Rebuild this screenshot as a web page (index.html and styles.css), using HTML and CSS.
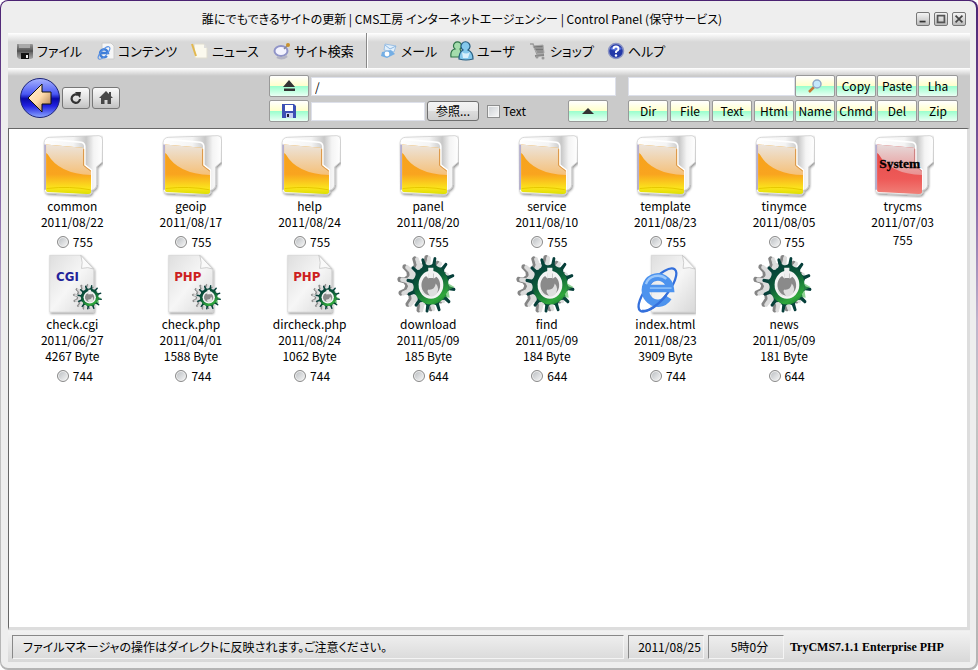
FILE: index.html
```html
<!DOCTYPE html>
<html lang="ja">
<head>
<meta charset="utf-8">
<title>Control Panel</title>
<link rel="stylesheet" href="styles.css">
</head>
<body>
<svg class="defs" aria-hidden="true">
  <defs>
    <linearGradient id="paper" x1="0" y1="0" x2="1" y2="1"><stop offset="0" stop-color="#dedede"/><stop offset=".5" stop-color="#f6f6f6"/><stop offset="1" stop-color="#d8d8d8"/></linearGradient>
    <linearGradient id="back" x1="0" y1="0" x2="1" y2="0"><stop offset="0" stop-color="#fff"/><stop offset=".5" stop-color="#f4f4f4"/><stop offset=".72" stop-color="#c8c8c8"/><stop offset=".85" stop-color="#f4f4f4"/><stop offset="1" stop-color="#fff"/></linearGradient>
    <linearGradient id="amber" x1="0" y1="0" x2="0" y2="1"><stop offset="0" stop-color="#f5a21c"/><stop offset=".6" stop-color="#f9a41f"/><stop offset=".88" stop-color="#fbe41c"/><stop offset="1" stop-color="#dce000"/></linearGradient>
    <linearGradient id="amberTop" x1="0" y1="0" x2="0" y2="1"><stop offset="0" stop-color="#ece4dc"/><stop offset="1" stop-color="#f5c078"/></linearGradient>
    <linearGradient id="red" x1="0" y1="0" x2="0" y2="1"><stop offset="0" stop-color="#e04848"/><stop offset=".7" stop-color="#ee5a58"/><stop offset="1" stop-color="#f08078"/></linearGradient>
    <linearGradient id="redTop" x1="0" y1="0" x2="0" y2="1"><stop offset="0" stop-color="#e6dada"/><stop offset="1" stop-color="#ea9090"/></linearGradient>
    <linearGradient id="green" gradientUnits="userSpaceOnUse" x1="-40" y1="-70" x2="30" y2="70"><stop offset="0" stop-color="#04383a"/><stop offset=".45" stop-color="#0c5c38"/><stop offset=".8" stop-color="#30a83c"/><stop offset="1" stop-color="#0f6a2c"/></linearGradient>
    <linearGradient id="blueBall" x1="0" y1="0" x2="0" y2="1"><stop offset="0" stop-color="#a8b4ff"/><stop offset=".4" stop-color="#4a58f4"/><stop offset=".52" stop-color="#0808a8"/><stop offset=".7" stop-color="#2020e0"/><stop offset="1" stop-color="#8ca8ff"/></linearGradient>
    <linearGradient id="sand" x1="0" y1="0" x2="1" y2="1"><stop offset="0" stop-color="#fff0d8"/><stop offset=".5" stop-color="#ffdcac"/><stop offset="1" stop-color="#a06c40"/></linearGradient>
    <linearGradient id="disk" x1="0" y1="0" x2="0" y2="1"><stop offset="0" stop-color="#999"/><stop offset=".45" stop-color="#555"/><stop offset="1" stop-color="#aaa"/></linearGradient>
    <filter id="soft" x="-20%" y="-20%" width="140%" height="140%"><feDropShadow dx="3" dy="4" stdDeviation="3" flood-opacity=".45"/></filter>

    <g id="tooth"><path d="M-15-52 L-6-62 L-5-80 Q0-85 4-80 L5-62 L15-52Z"/></g>
    <g id="cog">
      <use href="#tooth"/><use href="#tooth" transform="rotate(30)"/><use href="#tooth" transform="rotate(60)"/><use href="#tooth" transform="rotate(90)"/><use href="#tooth" transform="rotate(120)"/><use href="#tooth" transform="rotate(150)"/><use href="#tooth" transform="rotate(180)"/><use href="#tooth" transform="rotate(210)"/><use href="#tooth" transform="rotate(240)"/><use href="#tooth" transform="rotate(270)"/><use href="#tooth" transform="rotate(300)"/><use href="#tooth" transform="rotate(330)"/>
    </g>
    <g id="gear">
      <g transform="translate(-27 -3) rotate(10)" fill="#858585" stroke="#858585" stroke-width="6"><use href="#cog"/><circle r="54"/></g>
      <g transform="translate(-19 -2) rotate(10)" fill="#dcdcdc" stroke="#dcdcdc" stroke-width="3"><use href="#cog"/><circle r="56"/></g>
      <g transform="rotate(10)" fill="url(#green)"><use href="#cog"/></g>
      <circle r="58" fill="url(#green)"/>
      <path d="M30 50 A60 60 0 0 0 58-4 L78 6 L58 16 L62 38 L46 36Z" fill="#45b44c" opacity=".6"/>
      <circle r="41" fill="#f4f4f4"/>
      <path d="M-8-33 V-18 L-16-26 A31 31 0 1 0 18-24 L9-18 V-33Z" fill="#8a8a8a"/>
      <path d="M-34 4 Q-26 30 0 36 Q-18 18-8 14 Q12 16 16-4 Q30 10 18 28 Q-4 44-28 24Z" fill="#dedede"/>
      <rect x="-9" y="-50" width="17" height="30" fill="#f0f0f0"/>
    </g>
    <g id="sheet">
      <path d="M58 16 H153 L192 58 V189 H58Z" fill="url(#paper)" stroke="#d2d2d2" stroke-width="2" filter="url(#soft)"/>
      <path d="M153 16 Q160 40 155 56 Q175 50 192 58Z" fill="#fafafa" stroke="#bbb" stroke-width="2"/>
    </g>
    <g id="folderBack">
      <path d="M131 44 Q132 29 148 28 L298 23 Q309 24 309 36 L308 103 L291 118 V172 Q290 187 276 189 V197 Q272 205 262 204 L140 198 Q132 197 132 188Z" fill="url(#back)" stroke="#c8c8c8" stroke-width="2" filter="url(#soft)"/>
      <path d="M136 44 Q140 34 150 35 L244 43 Q255 45 255 56 V112 L275 128 V188" fill="none" stroke="#fff" stroke-width="5"/>
      <path d="M134 50 V188" stroke="#9c94c0" stroke-width="4"/>
    </g>
    <path id="frontPath" d="M137 50 L248 60 L253 64 V114 L274 130 V196 Q272 201 264 201 L142 195 Q137 194 137 190Z"/>
    <path id="frontTop" d="M137 50 L248 60 L253 64 V114 L274 130 V143 Q176 140 142 80 L137 76Z"/>
    <symbol id="folder" viewBox="123 21 186 192"><use href="#folderBack"/><use href="#frontPath" fill="url(#amber)"/><use href="#frontTop" fill="url(#amberTop)"/><path d="M251 64 V114 L273 131" fill="none" stroke="#dc9848" stroke-width="3"/><path d="M139 184 Q210 176 272 188" fill="none" stroke="#e6c800" stroke-width="3"/></symbol>
    <symbol id="folder-system" viewBox="123 21 186 192"><use href="#folderBack"/><use href="#frontPath" fill="url(#red)"/><use href="#frontTop" fill="url(#redTop)"/><path d="M251 64 V114 L273 131" fill="none" stroke="#cc8080" stroke-width="3"/><text x="206" y="122" text-anchor="middle" class="system">System</text></symbol>
    <symbol id="cgi" viewBox="33 9 186 192"><use href="#sheet"/><text x="112" y="95" text-anchor="middle" class="tag tag-cgi">CGI</text><use href="#gear" transform="translate(180 144) scale(.46)"/></symbol>
    <symbol id="php" viewBox="33 9 186 192"><use href="#sheet"/><text x="116" y="95" text-anchor="middle" class="tag tag-php">PHP</text><use href="#gear" transform="translate(180 144) scale(.46)"/></symbol>
    <symbol id="program" viewBox="53 9 186 192"><use href="#gear" transform="translate(155 106) scale(.92 1.040)"/></symbol>
    <symbol id="html" viewBox="7 9 186 192"><use href="#sheet"/><ellipse cx="77" cy="122" rx="82" ry="30" transform="rotate(-50 77 122)" fill="none" stroke="#3470dc" stroke-width="7"/><path d="M50 117 H116 A38 40 0 1 0 110 144" fill="none" stroke="#4d93ee" stroke-width="23"/><path d="M42 104 A38 36 0 0 1 104 88" fill="none" stroke="#9cc8fa" stroke-width="7"/><path d="M54 116 H120" stroke="#8cc0fa" stroke-width="5"/><path d="M30 184 A82 30 -50 0 0 104 138" fill="none" stroke="#3470dc" stroke-width="7"/></symbol>

    <symbol id="m-file" viewBox="0 0 18 18"><path d="M1 2 H16 Q17 2 17 3 V16 L15 17 H3 L1 15Z" fill="url(#disk)"/><path d="M3 2 H14 V6 H3Z" fill="#aaa"/><path d="M1 8 H17 V10 H1Z" fill="#555"/><path d="M5 11 H13 V17 H5Z" fill="#111"/><path d="M10 13 H12 V16 H10Z" fill="#eee"/></symbol>
    <symbol id="m-content" viewBox="0 0 18 18"><path d="M5 1 H14 L17 4 V17 H5Z" fill="#f6f6f6" stroke="#ccc"/><path d="M4 11 H11 A4 4 0 1 0 10 14" fill="none" stroke="#3f7ed8" stroke-width="2.4"/><ellipse cx="7" cy="11" rx="8" ry="3" transform="rotate(-48 7 11)" fill="none" stroke="#5c93e4"/></symbol>
    <symbol id="m-news" viewBox="0 0 18 18"><path d="M3 2 H13 L16 6 V16 H4Z" fill="#fbf9ee" stroke="#e0ddd0"/><path d="M13 2 V6 H16" fill="#ddd"/><path d="M1 2 L5 14" stroke="#e2b84e" stroke-width="2"/></symbol>
    <symbol id="m-search" viewBox="0 0 18 18"><ellipse cx="8" cy="9" rx="6.500" ry="5" fill="#f4f4ff" stroke="#9094c8" stroke-width="2"/><path d="M4 15 Q9 18 14 14" stroke="#b4b4c4" stroke-width="2.500" fill="none"/><path d="M11 7 L15 3" stroke="#889" stroke-width="1.5"/><circle cx="15" cy="3" r="2" fill="#c8902c"/></symbol>
    <symbol id="m-mail" viewBox="0 0 18 18"><path d="M5 2 L16 4 L14 10 L4 8Z" fill="#e2f0fc" stroke="#9cc0e4"/><path d="M2 10 L11 8 L15 12 L7 16 L1 14Z" fill="#74aee4"/><circle cx="7" cy="12" r="2.4" fill="#fff"/><path d="M5 3 L10 7 L16 4" stroke="#8cb6e0" fill="none"/></symbol>
    <symbol id="m-user" viewBox="0 0 24 20"><g stroke-width="1.2"><path d="M1 16 Q0 9 5 8 A4 4 0 1 1 10 8 L13 16Z" fill="#a4dcac" stroke="#2e7448"/><path d="M9 18 Q9 11 13 9 A4.500 4.500 0 1 1 18 9 Q23 11 23 18 Q16 20 9 18Z" fill="#84c8ec" stroke="#245c80"/><path d="M12 11 Q16 14 20 11 L18 17 H13Z" fill="#d8f0fc"/></g></symbol>
    <symbol id="m-shop" viewBox="0 0 18 18"><path d="M1 2 H4 L8 12 H15" fill="none" stroke="#999" stroke-width="1.5"/><path d="M4 4 L14 3 L15 11 H8Z" fill="#777" stroke="#aaa"/><path d="M6 6 H14 M7 9 H14" stroke="#bbb" stroke-width=".8"/><path d="M6 14 L15 13" stroke="#888" stroke-width="2"/><circle cx="8" cy="15" r="1.500" fill="#999"/><circle cx="14" cy="16" r="1.500" fill="#999"/></symbol>
    <symbol id="m-help" viewBox="0 0 18 18"><circle cx="9" cy="9" r="7.500" fill="#2338a8" stroke="#8a93c4" stroke-width="1.500"/><path d="M3 7 A7 6 0 0 1 15 7 Q9 10 3 7Z" fill="#5a74dc"/><path d="M6.500 7 Q6.500 4.500 9 4.500 T11.500 7 Q11.500 8.500 9 9.500 V11" fill="none" stroke="#fff" stroke-width="1.800"/><circle cx="9" cy="13.500" r="1.200" fill="#fff"/></symbol>
  </defs>
</svg>

<div class="frame">
<div class="window">
  <header class="titlebar">
    <h1 class="title">誰にでもできるサイトの更新 | CMS工房 インターネットエージェンシー | Control Panel (保守サービス)</h1>
    <div class="controls">
      <button class="ctl" aria-label="最小化"><svg viewBox="0 0 14 14"><path d="M3 9 H10 V11 H3Z" fill="#333"/></svg></button>
      <button class="ctl" aria-label="最大化"><svg viewBox="0 0 14 14"><path d="M3 3 H11 V11 H3Z" fill="none" stroke="#555" stroke-width="2"/></svg></button>
      <button class="ctl" aria-label="閉じる"><svg viewBox="0 0 14 14"><path d="M3 3 L11 11 M11 3 L3 11" stroke="#444" stroke-width="2"/></svg></button>
    </div>
  </header>

  <nav class="menu">
    <a href="#"><svg><use href="#m-file"/></svg>ファイル</a>
    <a href="#"><svg><use href="#m-content"/></svg>コンテンツ</a>
    <a href="#"><svg><use href="#m-news"/></svg>ニュース</a>
    <a href="#"><svg><use href="#m-search"/></svg>サイト検索</a>
    <span class="divider"></span>
    <a href="#"><svg><use href="#m-mail"/></svg>メール</a>
    <a href="#"><svg class="wide"><use href="#m-user"/></svg>ユーザ</a>
    <a href="#"><svg><use href="#m-shop"/></svg>ショップ</a>
    <a href="#"><svg><use href="#m-help"/></svg>ヘルプ</a>
  </nav>

  <div class="toolbar">
    <div class="history">
      <button class="back" aria-label="戻る"><svg viewBox="0 0 40 40"><circle cx="20" cy="20" r="19.500" fill="url(#blueBall)" stroke="#1c2478"/><path d="M8 20 L22 6 V14 H31 V26 H22 V34Z" fill="url(#sand)" stroke="#111"/></svg></button>
      <button class="small" aria-label="再読み込み"><svg viewBox="0 0 28 22"><path d="M16 8 A4.200 4.200 0 1 0 18 12" fill="none" stroke="#333" stroke-width="2.200"/><path d="M13 5 L19 5 L18 11Z" fill="#333"/></svg></button>
      <button class="small" aria-label="ホーム"><svg viewBox="0 0 28 22"><path d="M14 4 L21 11 H19 V17 H15.500 V13 H12.500 V17 H9 V11 H7Z M17 5 H19 V9 H17Z" fill="#484848"/></svg></button>
    </div>

    <div class="paths">
      <div class="row">
        <button class="key" aria-label="上へ"><svg viewBox="0 0 14 14"><path d="M7 1 L13 8 H1Z M2 9.500 H13 V12 H2Z" fill="#333"/></svg></button>
        <input class="field" type="text" value="/" aria-label="パス">
      </div>
      <div class="row">
        <button class="key" aria-label="保存"><svg viewBox="0 0 14 14"><path d="M0 0 H12 L14 2 V14 H0Z" fill="#3c50b4"/><path d="M3 1 H11 V7 H3Z" fill="#fff"/><path d="M4 9 H11 V14 H4Z" fill="#c8d0f4"/><path d="M5 10 H7 V13 H5Z" fill="#223"/></svg></button>
        <input class="field upload" type="text" aria-label="アップロードするファイル">
        <button class="browse">参照...</button>
        <label class="text-mode"><input type="checkbox">Text</label>
        <button class="key send" aria-label="アップロード"><svg viewBox="0 0 14 14"><path d="M7 4 L13 10 H1Z" fill="#333"/></svg></button>
      </div>
    </div>

    <div class="commands">
      <input class="field find" type="text" aria-label="検索">
      <button class="key" aria-label="検索する"><svg viewBox="0 0 14 14"><path d="M6 8 L1 13" stroke="#c87838" stroke-width="2.500"/><circle cx="9" cy="5" r="4" fill="#c4e8fc" stroke="#90a8c8" stroke-width="1.500"/></svg></button>
      <button class="key">Copy</button>
      <button class="key">Paste</button>
      <button class="key">Lha</button>
      <button class="key">Dir</button>
      <button class="key">File</button>
      <button class="key">Text</button>
      <button class="key">Html</button>
      <button class="key">Name</button>
      <button class="key">Chmd</button>
      <button class="key">Del</button>
      <button class="key">Zip</button>
    </div>
  </div>

  <main class="files">
    <div class="file"><svg><use href="#folder"/></svg><span>common</span><span>2011/08/22</span><label><input type="radio" name="f">755</label></div>
    <div class="file"><svg><use href="#folder"/></svg><span>geoip</span><span>2011/08/17</span><label><input type="radio" name="f">755</label></div>
    <div class="file"><svg><use href="#folder"/></svg><span>help</span><span>2011/08/24</span><label><input type="radio" name="f">755</label></div>
    <div class="file"><svg><use href="#folder"/></svg><span>panel</span><span>2011/08/20</span><label><input type="radio" name="f">755</label></div>
    <div class="file"><svg><use href="#folder"/></svg><span>service</span><span>2011/08/10</span><label><input type="radio" name="f">755</label></div>
    <div class="file"><svg><use href="#folder"/></svg><span>template</span><span>2011/08/23</span><label><input type="radio" name="f">755</label></div>
    <div class="file"><svg><use href="#folder"/></svg><span>tinymce</span><span>2011/08/05</span><label><input type="radio" name="f">755</label></div>
    <div class="file"><svg><use href="#folder-system"/></svg><span>trycms</span><span>2011/07/03</span><span class="mode">755</span></div>
    <div class="file"><svg><use href="#cgi"/></svg><span>check.cgi</span><span>2011/06/27</span><span>4267 Byte</span><label><input type="radio" name="f">744</label></div>
    <div class="file"><svg><use href="#php"/></svg><span>check.php</span><span>2011/04/01</span><span>1588 Byte</span><label><input type="radio" name="f">744</label></div>
    <div class="file"><svg><use href="#php"/></svg><span>dircheck.php</span><span>2011/08/24</span><span>1062 Byte</span><label><input type="radio" name="f">744</label></div>
    <div class="file"><svg><use href="#program"/></svg><span>download</span><span>2011/05/09</span><span>185 Byte</span><label><input type="radio" name="f">644</label></div>
    <div class="file"><svg><use href="#program"/></svg><span>find</span><span>2011/05/09</span><span>184 Byte</span><label><input type="radio" name="f">644</label></div>
    <div class="file"><svg><use href="#html"/></svg><span>index.html</span><span>2011/08/23</span><span>3909 Byte</span><label><input type="radio" name="f">744</label></div>
    <div class="file"><svg><use href="#program"/></svg><span>news</span><span>2011/05/09</span><span>181 Byte</span><label><input type="radio" name="f">644</label></div>
  </main>

  <footer class="status">
    <div class="pane message">ファイルマネージャの操作はダイレクトに反映されます。ご注意ください。</div>
    <div class="pane date">2011/08/25</div>
    <div class="pane date">5時0分</div>
    <strong class="brand">TryCMS7.1.1 Enterprise PHP</strong>
  </footer>
</div>
</div>
</body>
</html>
```

FILE: styles.css
```css
* { box-sizing: border-box; }

body {
  margin: 0;
  background: #fff;
  color: #000;
  font: 12px/16px "Noto Sans CJK JP", sans-serif;
  font-feature-settings: "palt";
}

button, input { font: inherit; font-feature-settings: inherit; color: inherit; margin: 0; }
button { padding: 0; display: flex; align-items: center; justify-content: center; }

.defs { position: absolute; width: 0; height: 0; }

.frame {
  min-height: 100vh;
  display: flex;
  padding: 1px 2px 2px 1px;
  border-radius: 8px;
  background: linear-gradient(#4b2272, #8868a8 30%, #c0b4cc 48%, #c4c4c4 60%, #b4b4b4);
}

.window {
  flex: 1;
  display: flex;
  flex-direction: column;
  padding: 1px 6px 6px 7px;
  border-radius: 7px;
  background: #eee;
}

.titlebar { display: flex; align-items: center; height: 31px; padding-top: 3px; }
.title { flex: 1; margin: 0; text-align: center; font-size: 12px; line-height: 16px; font-weight: normal; }
.controls { display: flex; gap: 4px; padding-right: 4px; }
.ctl {
  width: 14px;
  height: 14px;
  border: 1px solid #777;
  border-radius: 2px;
  background: linear-gradient(#f4f4f4, #bbb);
}
.ctl svg { width: 12px; height: 12px; flex: none; }

.menu {
  display: grid;
  grid-template-columns: 81px 94px 82px 93px 14px 70px 79px 78px 60px;
  align-items: center;
  height: 35px;
  padding-left: 8px;
  background: linear-gradient(#fff, #d8d8d8 9px);
  font-size: 13px;
  line-height: 20px;
}
.menu a { display: flex; align-items: center; gap: 3px; color: #000; text-decoration: none; white-space: nowrap; }
.menu svg { width: 18px; height: 18px; flex: none; }
.menu .wide { width: 24px; height: 20px; }
.divider { height: 35px; border-left: 1px solid #888; box-shadow: inset 1px 0 #fff; }

.toolbar {
  display: flex;
  align-items: flex-start;
  gap: 12px;
  padding: 7px 12px 6px;
  background: linear-gradient(#fff, #cacaca 8px);
}
.history { flex: 1; display: flex; align-items: center; gap: 2px; padding-top: 3px; }
.back { width: 40px; height: 40px; border: 0; background: none; }
.back svg { width: 40px; height: 40px; }
.small {
  width: 28px;
  height: 22px;
  border: 1px solid #777;
  border-radius: 3px;
  background: linear-gradient(#fafafa, #e2e2e2 50%, #c2c2c2);
}
.small svg { width: 28px; height: 22px; flex: none; }

.paths { width: 347px; display: grid; gap: 3px; }
.row { display: flex; align-items: center; gap: 2px; }
.key {
  width: 40px;
  height: 22px;
  flex: none;
  border: 1px solid #999;
  border-radius: 2px;
  background: linear-gradient(#fff, #ffffcc 48%, #99ffcc 50%, #eafff4);
}
.key svg { width: 14px; height: 14px; }
.field {
  flex: 1;
  min-width: 0;
  height: 19px;
  padding: 0 3px;
  border: 1px solid #dde0ea;
  background: #fff;
}
.upload { flex: none; width: 114px; }
.browse {
  width: 52px;
  height: 20px;
  border: 1px solid #707070;
  border-radius: 3px;
  background: linear-gradient(#f4f4f4, #ebebeb 50%, #ddd 50%, #cfcfcf);
}
.text-mode { display: flex; align-items: center; gap: 3px; padding-left: 6px; }
.text-mode input {
  appearance: none;
  width: 13px;
  height: 13px;
  border: 1px solid #8e8f8f;
  background: linear-gradient(135deg, #ccd0d4, #f8f8f8);
  box-shadow: inset 0 0 0 1px #f4f4f4;
}
.send { margin-left: auto; margin-right: 8px; }

.commands {
  display: grid;
  grid-template-columns: repeat(3, 42px) repeat(4, 41px) 40px;
  row-gap: 3px;
  align-items: center;
}
.find { grid-column: span 4; }

.files {
  flex: 1;
  display: grid;
  grid-template-columns: repeat(8, 1fr);
  align-content: start;
  padding: 6px 5px 0 4px;
  border: solid;
  border-width: 1px 3px 3px 1px;
  border-color: #666 #ddd #ddd #666;
  background: #fff;
}
.file { display: flex; flex-direction: column; align-items: center; }
.file > svg { width: 62px; height: 63px; }
.file label { display: flex; align-items: center; gap: 4px; height: 23px; padding-left: 5px; }
.file .mode { line-height: 20px; }
.file input {
  appearance: none;
  width: 12px;
  height: 12px;
  border: 1px solid #8a8a8a;
  border-radius: 50%;
  background: linear-gradient(135deg, #b8bcc0, #f8f8f8);
  box-shadow: inset 0 0 0 1px #f0f0f0;
}
.tag { font: bold 40px "DejaVu Sans Condensed", sans-serif; }
.tag-cgi { fill: #22229a; }
.tag-php { fill: #cc2020; }
.system { font: bold 41px "Liberation Serif", serif; stroke: #000; }

.status {
  display: flex;
  align-items: center;
  gap: 4px;
  height: 31px;
  margin-top: 1px;
  padding-left: 4px;
  background: linear-gradient(#f2f2f2, #d8d8d8);
}
.pane {
  height: 24px;
  padding: 3px 10px;
  border: 1px solid;
  border-color: #888 #f4f4f4 #f4f4f4 #888;
}
.message { flex: 1; }
.date { width: 76px; padding: 3px 0 3px 7px; text-align: center; }
.brand { width: 182px; padding-left: 2px; font: bold 12px/16px "Liberation Serif", serif; }
```
